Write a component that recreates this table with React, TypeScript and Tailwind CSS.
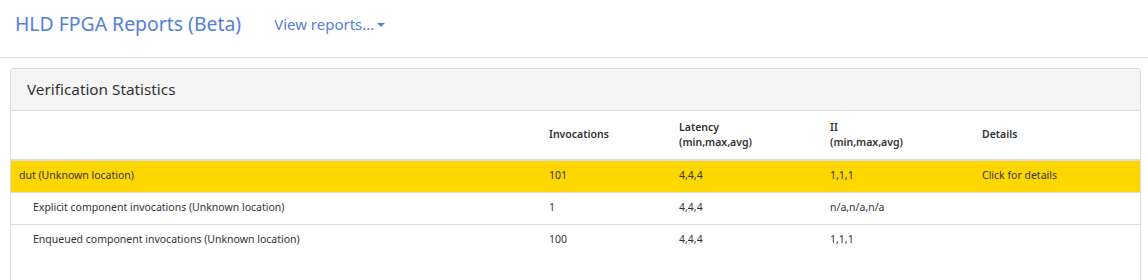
import React from "react";

const font = { fontFamily: '"Noto Sans", "Open Sans", sans-serif' };

const rows = [
  { name: "dut (Unknown location)", inv: "101", lat: "4,4,4", ii: "1,1,1", det: "Click for details", hl: true, indent: false },
  { name: "Explicit component invocations (Unknown location)", inv: "1", lat: "4,4,4", ii: "n/a,n/a,n/a", det: "", hl: false, indent: true },
  { name: "Enqueued component invocations (Unknown location)", inv: "100", lat: "4,4,4", ii: "1,1,1", det: "", hl: false, indent: true },
];

export default function App() {
  return (
    <div className="w-[1148px] h-[280px] overflow-hidden bg-white" style={font}>
      <div className="h-[58px] border-b border-[#dcdcdc] flex items-center">
        <div className="ml-[15px] text-[19.4px] text-[#5680d6] leading-none pb-[10px]">HLD FPGA Reports (Beta)</div>
        <div className="ml-[33px] text-[15px] text-[#5680d6] leading-none pb-[8px] flex items-center">
          View reports...
          <span className="ml-[3px] inline-block w-0 h-0 border-l-[4px] border-r-[4px] border-t-[4px] border-l-transparent border-r-transparent border-t-[#5680d6]"></span>
        </div>
      </div>
      <div className="mt-[10px] ml-[10px] w-[1131px] border border-[#dddddd] rounded-t-[3px] h-[300px]">
        <div className="h-[42px] bg-[#f5f5f5] border-b border-[#dddddd] flex items-center pl-[16px] text-[15.3px] text-[#333333]">
          Verification Statistics
        </div>
        <table className="w-full border-collapse text-[10.5px] text-[#333333] table-fixed">
          <colgroup>
            <col className="w-[530px]" />
            <col className="w-[130px]" />
            <col className="w-[151px]" />
            <col className="w-[152px]" />
            <col />
          </colgroup>
          <thead>
            <tr className="h-[49px] border-b-2 border-[#dddddd]">
              <th className="text-left font-semibold px-[8px] align-middle"></th>
              <th className="text-left font-semibold px-[8px] align-middle">Invocations</th>
              <th className="text-left font-semibold px-[8px] align-middle leading-[15px]">Latency<br />(min,max,avg)</th>
              <th className="text-left font-semibold px-[8px] align-middle leading-[15px]">II<br />(min,max,avg)</th>
              <th className="text-left font-semibold px-[8px] align-middle">Details</th>
            </tr>
          </thead>
          <tbody>
            {rows.map((r, i) => (
              <tr key={i} className={(r.hl ? "bg-[#ffd700] " : "") + (i > 0 ? "border-t border-[#dddddd] " : "") + "h-[32px]"}>
                <td className={(r.indent ? "pl-[22px]" : "pl-[8px]") + " pr-[8px] align-middle"}>{r.name}</td>
                <td className="px-[8px] align-middle">{r.inv}</td>
                <td className="px-[8px] align-middle">{r.lat}</td>
                <td className="px-[8px] align-middle">{r.ii}</td>
                <td className="px-[8px] align-middle">{r.det}</td>
              </tr>
            ))}
          </tbody>
        </table>
      </div>
    </div>
  );
}
